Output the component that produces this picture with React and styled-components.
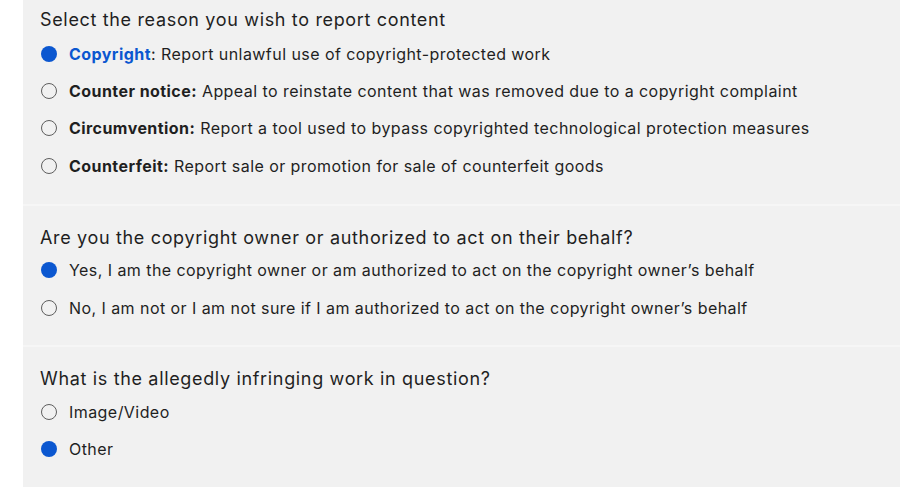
import React from 'react'
import styled, { createGlobalStyle } from 'styled-components'

const GlobalStyle = createGlobalStyle`
  html, body {
    margin: 0;
    padding: 0;
    background: #ffffff;
  }
  body {
    font-family: Inter, Roboto, "Noto Sans", "Liberation Sans", sans-serif;
    color: #1f1f1f;
  }
`

const Page = styled.div`
  width: 922px;
  height: 496px;
  padding: 0 22px 10px 23px;
  box-sizing: border-box;
`

const Panel = styled.div`
  background: #f1f1f1;
  display: flex;
  flex-direction: column;
`

const Section = styled.fieldset`
  margin: 0;
  border: 0;
  border-top: ${p => (p.first ? '0' : '2px solid #f6f6f6')};
  padding: ${p => (p.first ? '8px 17px 19px' : '20px 17px 19px')};
  display: flex;
  flex-direction: column;
`

const Title = styled.legend`
  float: left;
  width: 100%;
  padding: 0;
  font-size: 18px;
  line-height: 24px;
  letter-spacing: 0.66px;
  color: #1f1f1f;
  margin-bottom: ${p => (p.first ? '3px' : '2px')};
`

const Option = styled.label`
  clear: both;
  display: flex;
  align-items: center;
  height: 37.4px;
  font-size: 16px;
  letter-spacing: 0.44px;
  color: #1f1f1f;
  cursor: pointer;
`

const Dot = styled.span`
  flex: none;
  width: 16px;
  height: 16px;
  box-sizing: border-box;
  border-radius: 50%;
  margin-right: 12px;
  margin-left: 1px;
  border: ${p => (p.checked ? '0' : '1.5px solid #5e5e5e')};
  background: ${p => (p.checked ? '#0b57d0' : 'transparent')};
`

const Label = styled.b`
  font-weight: 700;
  color: ${p => (p.accent ? '#0b57d0' : '#1f1f1f')};
`

const sections = [
  {
    title: 'Select the reason you wish to report content',
    options: [
      { label: 'Copyright', rest: ': Report unlawful use of copyright-protected work', checked: true, accent: true },
      { label: 'Counter notice:', rest: ' Appeal to reinstate content that was removed due to a copyright complaint' },
      { label: 'Circumvention:', rest: ' Report a tool used to bypass copyrighted technological protection measures' },
      { label: 'Counterfeit:', rest: ' Report sale or promotion for sale of counterfeit goods' },
    ],
  },
  {
    title: 'Are you the copyright owner or authorized to act on their behalf?',
    options: [
      { rest: 'Yes, I am the copyright owner or am authorized to act on the copyright owner\u2019s behalf', checked: true },
      { rest: 'No, I am not or I am not sure if I am authorized to act on the copyright owner\u2019s behalf' },
    ],
  },
  {
    title: 'What is the allegedly infringing work in question?',
    options: [
      { rest: 'Image/Video' },
      { rest: 'Other', checked: true },
    ],
  },
]

export default function App() {
  return (
    <Page>
      <GlobalStyle />
      <Panel>
        {sections.map((s, i) => (
          <Section key={i} first={i === 0}>
            <Title first={i === 0}>{s.title}</Title>
            {s.options.map((o, j) => (
              <Option key={j}>
                <Dot checked={o.checked} />
                <span>
                  {o.label && <Label accent={o.accent}>{o.label}</Label>}
                  {o.rest}
                </span>
              </Option>
            ))}
          </Section>
        ))}
      </Panel>
    </Page>
  )
}
